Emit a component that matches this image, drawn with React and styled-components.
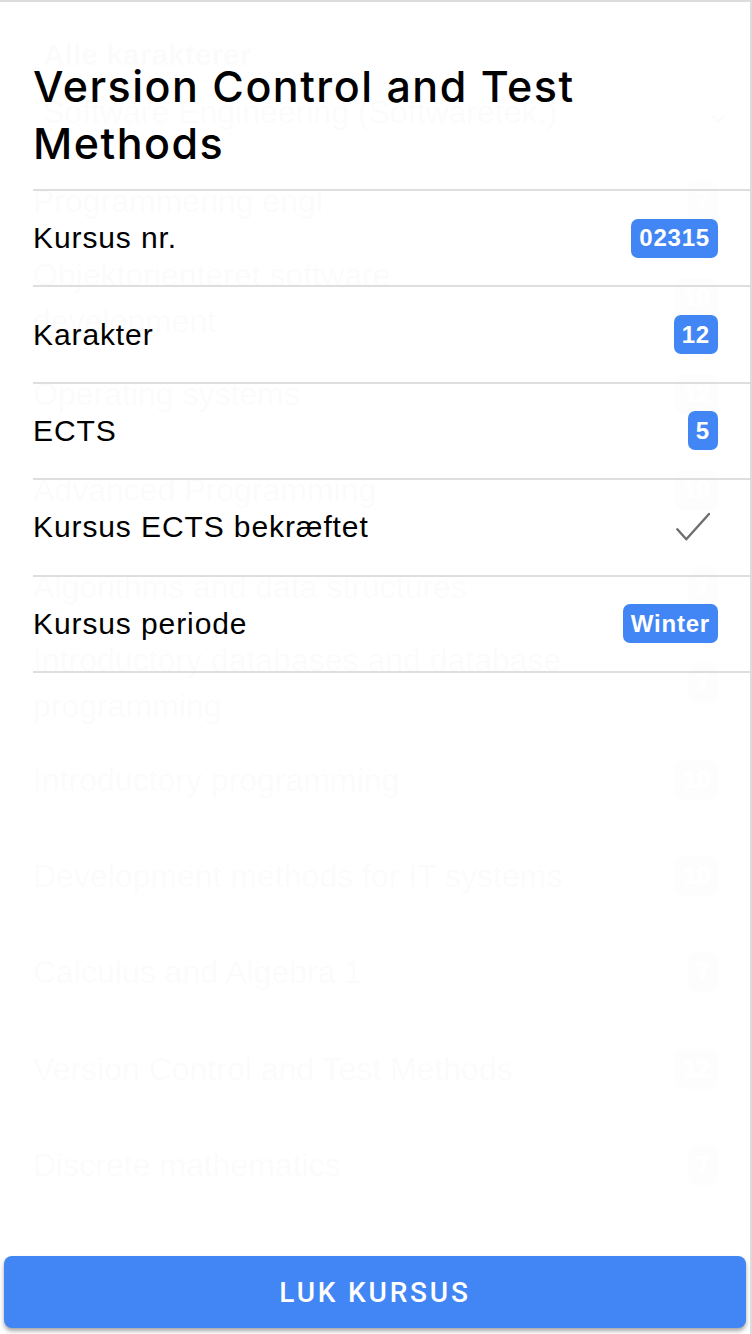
import React from 'react';
import styled, { createGlobalStyle } from 'styled-components';

const GlobalStyle = createGlobalStyle`
  html, body { margin: 0; padding: 0; background: #fff; }
  body { font-family: "Liberation Sans", Arial, sans-serif; }
  * { box-sizing: border-box; }
`;

const Screen = styled.div`
  position: relative;
  width: 752px;
  height: 1334px;
  overflow: hidden;
  background: #fff;
`;

/* ---------- background page (seen through the sheet) ---------- */
const Page = styled.div`
  display: flex;
  flex-direction: column;
  height: 100%;
  color: #333;
  font-family: "Liberation Sans", Arial, sans-serif;
`;

const PageHeader = styled.header`
  height: 153px;
  display: flex;
  flex-direction: column;
  padding: 38px 20px 0 43px;
`;

const PageTitle = styled.h1`
  margin: 0;
  font-size: 30px;
  line-height: 34px;
  font-weight: 700;
`;

const Picker = styled.div`
  margin-top: 20px;
  display: flex;
  align-items: center;
  justify-content: space-between;
  font-size: 32px;
  line-height: 40px;
`;

const BgList = styled.div`
  flex: 1;
  min-height: 0;
  overflow: hidden;
  padding: 0 34px 0 33px;
`;

const BgRow = styled.div`
  height: 96.4px;
  display: flex;
  align-items: center;
  justify-content: space-between;
  font-size: 32px;
  line-height: 46px;
`;

const BgBadge = styled.span`
  min-width: 30px;
  height: 40px;
  padding: 0 8px;
  border-radius: 7px;
  background: #999;
  color: #fff;
  font-weight: 700;
  font-size: 24px;
  display: flex;
  align-items: center;
  justify-content: center;
`;

const TabBar = styled.nav`
  height: 90px;
  display: grid;
  grid-template-columns: repeat(3, 1fr);
  border-top: 1px solid #ccc;
`;

const Tab = styled.div`
  display: flex;
  flex-direction: column;
  align-items: center;
  justify-content: center;
  gap: 8px;
  font-size: 22px;
  color: #555;
`;

const TabIcon = styled.span`
  width: 34px;
  height: 26px;
  border: 2px solid #555;
  border-radius: 6px;
`;

/* ---------- foreground sheet ---------- */
const Sheet = styled.div`
  position: absolute;
  inset: 0;
  display: flex;
  flex-direction: column;
  background: rgba(255, 255, 255, 0.986);
  border-top: 2px solid #dcdcdc;
  border-right: 2px solid #dcdcdc;
`;

const Title = styled.h2`
  margin: 0 0 17px;
  padding: 56px 40px 0 33px;
  font-family: Inter, "Liberation Sans", Arial, sans-serif;
  font-size: 43px;
  line-height: 57px;
  font-weight: 500;
  letter-spacing: 1.5px;
  color: #000;
`;

const InfoList = styled.div`
  margin-left: 33px;
  border-bottom: 2px solid #dedede;
`;

const InfoRow = styled.div`
  height: 96.4px;
  display: flex;
  align-items: center;
  justify-content: space-between;
  padding-right: 32px;
  border-top: 2px solid #dedede;
`;

const Label = styled.span`
  font-family: "Liberation Sans", Arial, sans-serif;
  font-size: 30px;
  letter-spacing: 0.9px;
  color: #000;
`;

const Badge = styled.span`
  height: 39px;
  padding: 0 8px;
  border-radius: 7px;
  background: #4286f5;
  color: #fff;
  font-family: "Liberation Sans", Arial, sans-serif;
  font-weight: 700;
  font-size: 24px;
  letter-spacing: 0.8px;
  display: flex;
  align-items: center;
  justify-content: center;
`;

const Check = styled.svg`
  width: 34px;
  height: 30px;
  margin-right: 8px;
`;

const Spacer = styled.div`
  flex: 1;
`;

const CloseButton = styled.button`
  margin: 0 4px 6px 4px;
  height: 72px;
  border: none;
  border-radius: 8px;
  background: #4286f5;
  box-shadow: 0 3px 4px rgba(0, 0, 0, 0.35);
  color: #fff;
  font-family: Roboto, "Liberation Sans", sans-serif;
  font-weight: 500;
  font-size: 28px;
  letter-spacing: 2.8px;
  text-transform: uppercase;
  display: flex;
  align-items: center;
  justify-content: center;
  cursor: pointer;
`;

const bgRows = [
  { lines: ['Programmering engl'], grade: '7' },
  { lines: ['Objektorienteret software', 'development'], grade: '10' },
  { lines: ['Operating systems'], grade: '12' },
  { lines: ['Advanced Programming'], grade: '10' },
  { lines: ['Algorithms and data structures'], grade: '7' },
  { lines: ['Introductory databases and database', 'programming'], grade: '7' },
  { lines: ['Introductory programming'], grade: '10' },
  { lines: ['Development methods for IT systems'], grade: '10' },
  { lines: ['Calculus and Algebra 1'], grade: '7' },
  { lines: ['Version Control and Test Methods'], grade: '12' },
  { lines: ['Discrete mathematics'], grade: '7' },
];

const info = [
  { label: 'Kursus nr.', value: '02315' },
  { label: 'Karakter', value: '12' },
  { label: 'ECTS', value: '5' },
  { label: 'Kursus ECTS bekræftet', check: true },
  { label: 'Kursus periode', value: 'Winter' },
];

export default function App() {
  return (
    <>
      <GlobalStyle />
      <Screen>
        <Page aria-hidden="true">
          <PageHeader>
            <PageTitle>Alle karakterer</PageTitle>
            <Picker>
              <span>Software Engineering (Softwaretek.)</span>
              <span>⌄</span>
            </Picker>
          </PageHeader>
          <BgList>
            {bgRows.map((r, i) => (
              <BgRow key={i}>
                <div>
                  {r.lines.map((l, j) => (
                    <div key={j}>{l}</div>
                  ))}
                </div>
                <BgBadge>{r.grade}</BgBadge>
              </BgRow>
            ))}
          </BgList>
          <TabBar>
            <Tab><TabIcon />Alle karakterer</Tab>
            <Tab><TabIcon />Tilføj kursus</Tab>
            <Tab><TabIcon />Indstillinger</Tab>
          </TabBar>
        </Page>

        <Sheet>
          <Title>Version Control and Test Methods</Title>
          <InfoList>
            {info.map((row) => (
              <InfoRow key={row.label}>
                <Label>{row.label}</Label>
                {row.check ? (
                  <Check viewBox="0 0 34 30" fill="none">
                    <path
                      d="M1.3 17.3 L10.3 27.3 L33 2"
                      stroke="#6e6e6e"
                      strokeWidth="2.4"
                      strokeLinecap="round"
                      strokeLinejoin="round"
                    />
                  </Check>
                ) : (
                  <Badge>{row.value}</Badge>
                )}
              </InfoRow>
            ))}
          </InfoList>
          <Spacer />
          <CloseButton>Luk kursus</CloseButton>
        </Sheet>
      </Screen>
    </>
  );
}
